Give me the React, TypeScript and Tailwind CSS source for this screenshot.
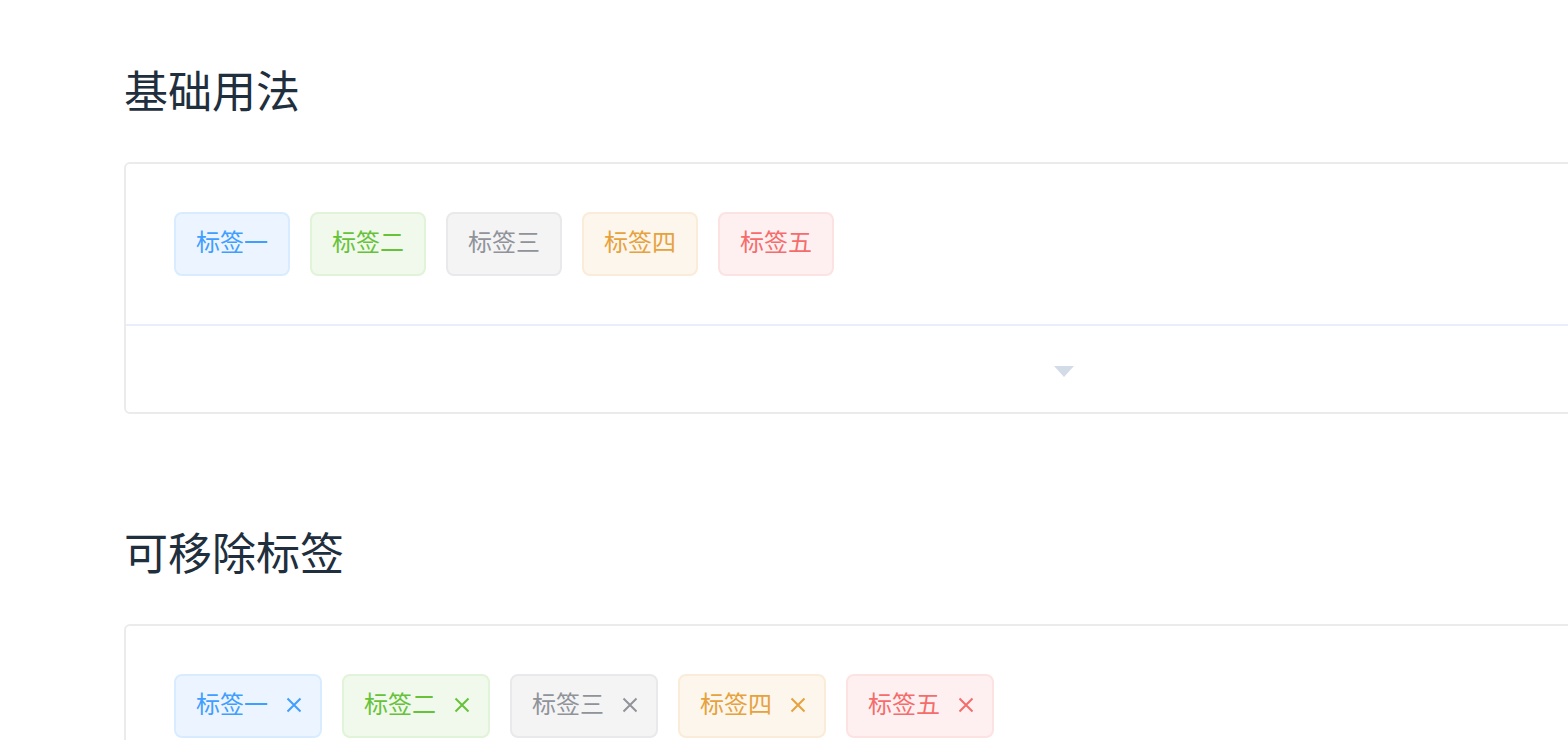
const TAGS = [
  { label: "标签一", cls: "bg-[#ecf5ff] border-[#d9ecff] text-[#409eff]" },
  { label: "标签二", cls: "bg-[#f0f9eb] border-[#e1f3d8] text-[#67c23a]" },
  { label: "标签三", cls: "bg-[#f4f4f5] border-[#e9e9eb] text-[#909399]" },
  { label: "标签四", cls: "bg-[#fdf6ec] border-[#faecd8] text-[#e6a23c]" },
  { label: "标签五", cls: "bg-[#fef0f0] border-[#fde2e2] text-[#f56c6c]" },
];

function Tag({ label, cls, closable }: { label: string; cls: string; closable?: boolean }) {
  return (
    <span
      className={`box-border inline-flex h-16 items-center whitespace-nowrap rounded-lg border-2 px-5 pb-[6px] text-[24px] leading-[54px] ${cls}`}
    >
      {label}
      {closable && (
        <span className="relative left-[10px] top-[2px] flex h-8 w-8 items-center justify-center">
          <svg width="16" height="16" viewBox="0 0 16 16" fill="none">
            <path d="M1.5 1.5 L14.5 14.5 M14.5 1.5 L1.5 14.5" stroke="currentColor" strokeWidth="2" />
          </svg>
        </span>
      )}
    </span>
  );
}

function DemoBlock({ closable }: { closable?: boolean }) {
  return (
    <div className="w-[1880px] rounded-[6px] border-2 border-[#ebebeb]">
      <div className="flex gap-5 p-12">
        {TAGS.map((t) => (
          <Tag key={t.label} label={t.label} cls={t.cls} closable={closable} />
        ))}
      </div>
      <div className="flex h-[88px] items-center justify-center border-t-2 border-[#eaeefb] pt-[5px]">
        <svg width="20" height="11" viewBox="0 0 20 11">
          <path d="M0 0 H20 L10 11 Z" fill="#d3dce6" />
        </svg>
      </div>
    </div>
  );
}

export default function App() {
  return (
    <div
      className="min-h-[740px] w-[1568px] overflow-hidden bg-white pl-[124px] pt-[56px]"
      style={{ fontFamily: '"Noto Sans CJK SC", "Noto Sans", sans-serif' }}
    >
      <h3 className="mb-[40px] text-[44px] font-normal leading-[66px] text-[#1f2f3d]">基础用法</h3>
      <DemoBlock />
      <h3 className="mb-[40px] mt-[104px] text-[44px] font-normal leading-[66px] text-[#1f2f3d]">
        可移除标签
      </h3>
      <DemoBlock closable />
    </div>
  );
}
